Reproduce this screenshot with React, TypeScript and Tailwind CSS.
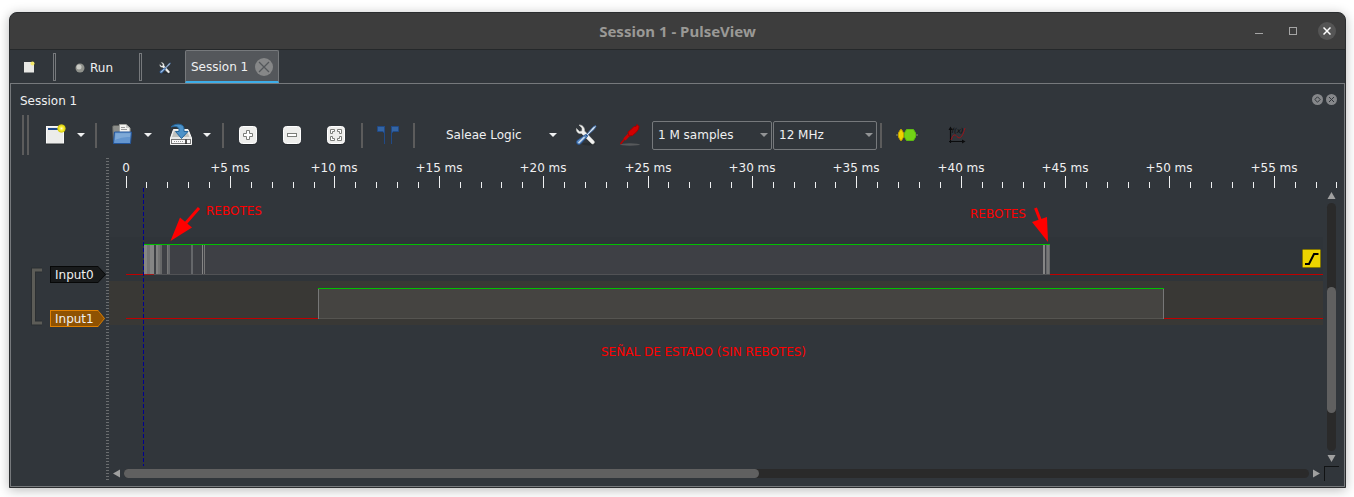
import React from "react";

const TICK = 20.876;
const ORIGIN = 17.12;

const BARS = [
  [35, 3, "#858585"], [38, 3, "#747474"], [41, 4, "#858585"],
  [47, 2, "#828282"], [49, 2, "#747474"], [51, 2, "#666768"],
  [58, 1, "#777777"], [59, 2, "#65676a"], [82, 2, "#65676a"],
  [93, 1, "#858585"], [95, 1, "#777777"],
  [934, 2, "#858585"], [937, 1, "#65676a"], [938, 2, "#777777"], [940, 1, "#65676a"],
] as const;

function Arrow({ dim = false }: { dim?: boolean }) {
  return (
    <svg width="8" height="4" viewBox="0 0 8 4" aria-hidden="true">
      <path d="M0 0H8L4 4Z" fill={dim ? "#929496" : "#eff0f1"} />
    </svg>
  );
}

function Separator() {
  return <span className="h-[25px] w-0.5 shrink-0 bg-[#5c5c5c]" />;
}

function ToolButton({ label, className = "w-11", children }: { label: string; className?: string; children: React.ReactNode }) {
  return (
    <button type="button" aria-label={label} className={`flex h-8 shrink-0 items-center justify-center ${className}`}>
      {children}
    </button>
  );
}

function SplitButton({ label, children }: { label: string; children: React.ReactNode }) {
  return (
    <div className="flex shrink-0">
      <ToolButton label={label} className="w-9">{children}</ToolButton>
      <ToolButton label={`${label} options`} className="w-4"><Arrow /></ToolButton>
    </div>
  );
}

function NewIcon() {
  return (
    <svg width="22" height="22" viewBox="0 0 22 22">
      <defs>
        <radialGradient id="glow">
          <stop offset="0" stopColor="#fffde0" />
          <stop offset="0.35" stopColor="#fff33b" />
          <stop offset="0.8" stopColor="#d9cf10" />
          <stop offset="1" stopColor="#d9cf10" stopOpacity="0.2" />
        </radialGradient>
      </defs>
      <rect x="2.5" y="2.5" width="17" height="17" fill="#ececea" stroke="#fafafa" />
      <rect x="2" y="19.5" width="18" height="1" fill="#24282b" />
      <rect x="4" y="4" width="12" height="2" fill="#204a87" />
      <circle cx="17.500" cy="4.500" r="4.500" fill="url(#glow)" />
    </svg>
  );
}

function OpenIcon() {
  return (
    <svg width="22" height="22" viewBox="0 0 22 22">
      <path d="M1.500 2.500L3 1.500H8L9 3V18H2.500Z" fill="#8b8d89" stroke="#5b5d5a" />
      <path d="M8.500 .5H15L19 4V11H8.500Z" fill="#f2f2f0" stroke="#a5a7a3" />
      <path d="M15 .5V4H19" fill="#c8c9c6" />
      <path d="M10 3.500H14M10 5.500H16" stroke="#999" />
      <path d="M3.500 8H20.500L19.500 19.500H2.500Z" fill="#6496cf" stroke="#24569b" />
      <path d="M4.500 9.200H19.300L19 13C12 13 9 14 4 16Z" fill="#8cb3dc" opacity=".65" />
    </svg>
  );
}

function SaveIcon() {
  return (
    <svg width="24" height="24" viewBox="0 0 24 24">
      <path d="M4.500 6.500H19L22.500 15V21.500H1.500V15Z" fill="#e8e9e7" stroke="#f8f8f7" />
      <path d="M5 8H18L20.500 14H3Z" fill="#bfc1be" />
      <rect x="2.500" y="16.500" width="19" height="4" fill="#fafafa" stroke="#777" />
      <path d="M5 18.500H14" stroke="#999" strokeDasharray="1 1" />
      <path d="M17 16.500V21" stroke="#222" strokeWidth="1.500" />
      <path d="M2 4C5 .5 14-.5 15 5V8.500H19L12.500 15.500L6.500 8.500H10V6C9 3 5.500 3 2 4Z" fill="#4d92c8" stroke="#25669b" />
    </svg>
  );
}

function ZoomIcon({ kind }: { kind: "in" | "out" | "fit" }) {
  return (
    <svg width="20" height="20" viewBox="0 0 20 20">
      <rect x="1" y="2" width="18" height="18" rx="3.500" fill="#202326" opacity=".6" />
      <rect x="1.500" y="1.500" width="17" height="17" rx="3" fill="#eeeeec" stroke="#fff" />
      {kind === "in" && <path d="M8.500 5.500H11.500V8.500H14.500V11.500H11.500V14.500H8.500V11.500H5.500V8.500H8.500Z" fill="#fff" stroke="#7c7e7a" />}
      {kind === "out" && <rect x="5.500" y="8.500" width="9" height="3" fill="#fff" stroke="#7c7e7a" />}
      {kind === "fit" && (
        <path
          d="M4.500 8.500V4.500H8.500V6.500H6.500V8.500ZM11.500 4.500H15.500V8.500H13.500V6.500H11.500ZM4.500 11.500H6.500V13.500H8.500V15.500H4.500ZM13.500 11.500H15.500V15.500H11.500V13.500H13.500Z"
          fill="#fff" stroke="#7c7e7a"
        />
      )}
    </svg>
  );
}

function CursorsIcon() {
  return (
    <svg width="22" height="20" viewBox="0 0 22 20">
      <path d="M.5 1.500H7.500V8L5.500 6.500H.5ZM21.500 1.500H14.500V8L16.500 6.500H21.500Z" fill="#3465a4" stroke="#204a87" />
      <path d="M7.500 1V19M14.500 1V19" stroke="#204a87" />
    </svg>
  );
}

function ToolsIcon({ size = 22 }: { size?: number }) {
  return (
    <svg width={size} height={size} viewBox="0 0 22 22">
      <ellipse cx="14" cy="20" rx="7" ry="1.500" fill="#202326" opacity=".5" />
      <path d="M4 1L7 4V7L4.500 7.500L1.500 4.500C1 7.500 3 10 6.500 9.500L16.500 19.500C18 21 20.500 19 19 17L9.500 7C10 3.500 7 .5 4 1Z" fill="#f1f1ef" stroke="#c5c6c3" strokeWidth=".6" />
      <path d="M20.500 1.500L18 3L11 11L12 12L19.500 5L21 2.500Z" fill="#d9e3ee" stroke="#3465a4" strokeWidth=".9" />
      <path d="M10.500 10.500L12.500 12.500L5.500 20C3.500 22 0 19 2 16.500Z" fill="#5384bd" stroke="#204a87" strokeWidth=".8" />
      <path d="M9.500 13L3.500 19" stroke="#d1dfee" strokeWidth="1.500" />
    </svg>
  );
}

function ProbeIcon() {
  return (
    <svg width="22" height="22" viewBox="0 0 22 22">
      <ellipse cx="11" cy="20.500" rx="10" ry="1.200" fill="#777" opacity=".55" />
      <path d="M1.500 20L8 12" stroke="#b00" strokeWidth="1.500" />
      <path d="M5.500 15.500L11 9.500" stroke="#c00" strokeWidth="3" />
      <path d="M9 8L11 6.500L15 2.500L17 2.500L18 .5L20 2.500L19.500 5L17.500 8L13.500 11.500L10 12Z" fill="#d20000" stroke="#a40000" />
    </svg>
  );
}

function DecoderIcon() {
  return (
    <svg width="22" height="12" viewBox="0 0 22 12">
      <path d="M0 6H22" stroke="#8a8d75" />
      <path d="M4.500 .5H5.500L7.500 4V8L5.500 11.500H4.500L2.500 8V4Z" fill="#edd400" stroke="#c4a000" />
      <path d="M10.500 .5H17.500L19.500 4V8L17.500 11.500H10.500L8.500 8V4Z" fill="#73d216" stroke="#5dbb12" />
    </svg>
  );
}

function MathIcon() {
  return (
    <svg width="18" height="18" viewBox="0 0 18 18">
      <path d="M2.500 17V2M1 15.500H15" stroke="#0b0c0d" strokeWidth="1.200" fill="none" />
      <path d="M.5 4L2.500 .5L4.500 4ZM14 13.500L17.500 15.500L14 17.500Z" fill="#0b0c0d" />
      <path d="M3 14C5 8 7 8 9 10.500S14 13 17 2" stroke="#a01218" fill="none" />
      <text x="3.500" y="7" fontSize="7" fontStyle="italic" fill="#0b0c0d" fontFamily="DejaVu Sans, sans-serif">f(x)</text>
    </svg>
  );
}

function TabSeparator() {
  return <span className="mt-[3px] h-7 w-[3px] shrink-0 border border-[#76797c]" />;
}

function SelectBox({ label, options, className }: { label: string; options: string[]; className: string }) {
  return (
    <div className={`relative shrink-0 ${className}`}>
      <select aria-label={label} className="h-[29px] w-full appearance-none rounded-xs border border-[#76797c] bg-[#31363b] pl-[5px] pr-5 text-xs text-[#eff0f1]">
        {options.map((o) => <option key={o}>{o}</option>)}
      </select>
      <span className="pointer-events-none absolute inset-y-0 right-1 flex items-center"><Arrow dim /></span>
    </div>
  );
}

function Ruler() {
  return (
    <svg className="mr-1.5 h-[30px] shrink-0" shapeRendering="crispEdges" fill="#eff0f1" fontSize="12">
      {Array.from({ length: 59 }, (_, i) => {
        const x = Math.floor(ORIGIN + i * TICK);
        const major = i % 5 === 0;
        return (
          <g key={i}>
            <rect x={x} y={major ? 18 : 24} width="1" height={major ? 12 : 6} />
            {major && <text x={x} y="14" textAnchor="middle">{i === 0 ? "0" : `+${i} ms`}</text>}
          </g>
        );
      })}
    </svg>
  );
}

function Plot() {
  return (
    <svg className="h-full min-w-0 flex-1" fontSize="12">
      <g shapeRendering="crispEdges">
        <rect y="49" width="100%" height="44" fill="#2f3439" />
        <rect y="93" width="100%" height="44" fill="#393835" />
        <rect x="17" y="86" width="100%" height="1" fill="#c00000" />
        <rect x="35" y="57" width="906" height="30" fill="#3e4045" />
        <rect x="35" y="86" width="906" height="1" fill="#515255" />
        <rect x="35" y="86" width="10" height="1" fill="#a01818" />
        {BARS.map(([x, w, fill]) => <rect key={x} x={x} y="57" width={w} height="29" fill={fill} />)}
        <rect x="35" y="56" width="906" height="1" fill="#00c000" />
        <rect x="17" y="130" width="100%" height="1" fill="#c00000" />
        <rect x="209" y="101" width="846" height="30" fill="#454441" />
        <rect x="209" y="130" width="846" height="1" fill="#555450" />
        <rect x="209" y="101" width="1" height="30" fill="#777" />
        <rect x="1054" y="101" width="1" height="30" fill="#777" />
        <rect x="209" y="100" width="846" height="1" fill="#00c000" />
        {Array.from({ length: 47 }, (_, i) => <rect key={i} x="34" y={i * 6} width="1" height={i === 46 ? 2 : 4} fill="#000090" />)}
      </g>
      <g fill="#f00" stroke="#f00">
        <path d="M90 20L76 36" strokeWidth="3" />
        <path d="M61.500 53L71 29.500L83 39.500Z" stroke="none" />
        <path d="M926.500 20L932 34" strokeWidth="3" />
        <path d="M939 54L923 34L938 29Z" stroke="none" />
      </g>
      <g fill="#f00">
        <text x="97" y="27">REBOTES</text>
        <text x="861" y="30">REBOTES</text>
        <text x="492" y="168">SEÑAL DE ESTADO (SIN REBOTES)</text>
      </g>
      <svg x="100%" overflow="visible">
        <rect x="-20.500" y="61.500" width="18" height="18" rx="1" fill="#edd400" stroke="#857700" />
        <path d="M-18 76H-14L-9 66H-4.500" fill="none" stroke="#000" strokeWidth="2" />
      </svg>
    </svg>
  );
}

function ScrollArrow({ d, label }: { d: string; label: string }) {
  return (
    <button type="button" aria-label={label} className="flex size-[9px] shrink-0 items-center justify-center">
      <svg width="9" height="9" viewBox="0 0 9 9"><path d={d} fill="#a0a0a0" /></svg>
    </button>
  );
}

export default function App() {
  return (
    <div className="flex h-screen min-h-[400px] bg-white pb-[9px] pl-[9px] pr-2 pt-3 font-['DejaVu_Sans',sans-serif] text-xs text-[#eff0f1]">
      <main className="flex min-w-0 flex-1 flex-col overflow-hidden rounded-t-lg border border-[#2b2d2f] bg-[#31363b] shadow-[0_2px_12px_rgba(0,0,0,0.28)]">
        <header className="flex h-[37px] shrink-0 items-center border-b border-[#25282a] bg-[#3d3d3d] pr-[9px]">
          <div className="w-[95px] shrink-0" />
          <h1 className="flex-1 text-center font-['Noto_Sans',sans-serif] text-[15px] font-bold text-[#9a9996]">Session 1 - PulseView</h1>
          <div className="flex w-[86px] shrink-0 items-center justify-between">
            <button type="button" aria-label="Minimize" className="flex h-[18px] w-[18px] items-center justify-center">
              <span className="mt-1 h-px w-2 bg-[#a5a5a5]" />
            </button>
            <button type="button" aria-label="Maximize" className="flex h-[18px] w-[14px] items-center justify-center">
              <span className="size-2 border border-[#a5a5a5]" />
            </button>
            <button type="button" aria-label="Close" className="flex size-[18px] items-center justify-center rounded-full bg-[#555]">
              <svg width="8" height="8" viewBox="0 0 8 8"><path d="M.5 .5L7.500 7.500M7.500 .5L.5 7.500" stroke="#fff" strokeWidth="1.500" /></svg>
            </button>
          </div>
        </header>

        <nav className="flex h-[33px] shrink-0">
          <button type="button" aria-label="New session" className="mr-[5px] flex w-[38px] items-center justify-center">
            <svg width="12" height="12" viewBox="0 0 12 12">
              <rect x="1" y="1" width="10" height="10.500" fill="#e8e8e5" />
              <circle cx="9.500" cy="2.500" r="2" fill="#f5e96a" />
            </svg>
          </button>
          <TabSeparator />
          <button type="button" className="flex w-[83px] items-center gap-[5px] pl-[19px] pt-0.5">
            <svg width="10" height="10" viewBox="0 0 10 10">
              <circle cx="5" cy="5" r="4.500" fill="#90928c" />
              <circle cx="4" cy="4" r="2.500" fill="#c9cac4" />
            </svg>
            Run
          </button>
          <TabSeparator />
          <button type="button" aria-label="Settings" className="flex w-[43px] items-center justify-center pl-0.5 pt-0.5"><ToolsIcon size={12} /></button>
          <div className="flex w-[94px] shrink-0 items-center justify-between rounded-t-xs border border-b-2 border-[#76797c] border-b-[#3daee9] bg-[#54575b] pl-[5px] pr-[5px] pt-0.5">
            <button type="button">Session 1</button>
            <button type="button" aria-label="Close session">
              <svg className="block" width="18" height="18" viewBox="0 0 18 18">
                <circle cx="9" cy="9" r="9" fill="#868788" />
                <path d="M4 4L14 14M14 4L4 14" stroke="#54575b" strokeWidth="1.300" />
              </svg>
            </button>
          </div>
        </nav>

        <section className="flex min-h-0 flex-1 flex-col border border-[#76797c]">
          <div className="flex h-[29px] shrink-0 items-center justify-between pl-[9px] pr-[7px] pt-1">
            <h2>Session 1</h2>
            <div className="flex gap-[3px] pb-0.5">
              <button type="button" aria-label="Float panel">
                <svg className="block" width="11" height="11" viewBox="0 0 11 11"><circle cx="5.500" cy="5.500" r="5.500" fill="#85878a" /><path d="M5.500 2.800L8.200 5.500L5.500 8.200L2.800 5.500Z" fill="none" stroke="#31363b" /></svg>
              </button>
              <button type="button" aria-label="Close panel">
                <svg className="block" width="11" height="11" viewBox="0 0 11 11"><circle cx="5.500" cy="5.500" r="5.500" fill="#85878a" /><path d="M3 3L8 8M8 3L3 8" stroke="#31363b" /></svg>
              </button>
            </div>
          </div>

          <div className="flex h-[42px] shrink-0 items-center overflow-hidden pl-[11px] pt-0.5">
            <span className="mr-2 h-10 w-[7px] shrink-0 border-x-2 border-[#5c5c5c]" />
            <div className="flex shrink-0 items-center gap-1.5">
              <SplitButton label="New view"><NewIcon /></SplitButton>
              <Separator />
            </div>
            <div className="ml-[7px] flex shrink-0 items-center gap-[7px]">
              <SplitButton label="Open"><OpenIcon /></SplitButton>
              <SplitButton label="Save"><SaveIcon /></SplitButton>
              <Separator />
            </div>
            <div className="ml-0.5 flex shrink-0">
              <ToolButton label="Zoom in"><ZoomIcon kind="in" /></ToolButton>
              <ToolButton label="Zoom out"><ZoomIcon kind="out" /></ToolButton>
              <ToolButton label="Zoom to fit"><ZoomIcon kind="fit" /></ToolButton>
            </div>
            <div className="ml-[3px] flex shrink-0 items-center gap-[3px]">
              <Separator />
              <ToolButton label="Show cursors"><CursorsIcon /></ToolButton>
              <Separator />
            </div>
            <button type="button" className="ml-[23px] flex h-8 w-[127px] shrink-0 items-center justify-between px-2">Saleae Logic <Arrow /></button>
            <ToolButton label="Configure device" className="w-[42px]"><ToolsIcon /></ToolButton>
            <ToolButton label="Configure channels" className="w-[45px]"><ProbeIcon /></ToolButton>
            <SelectBox label="Sample count" options={["1 M samples", "2 M samples"]} className="w-[120px]" />
            <SelectBox label="Sample rate" options={["12 MHz", "24 MHz"]} className="ml-px mr-[3px] w-[104px]" />
            <Separator />
            <ToolButton label="Add protocol decoder" className="ml-[3px] w-11"><DecoderIcon /></ToolButton>
            <ToolButton label="Add math signal" className="ml-1.5 w-11"><MathIcon /></ToolButton>
          </div>

          <div className="mt-[3px] flex min-h-0 flex-1">
            <aside className="flex w-[95px] shrink-0 items-start pl-5 pt-[108px]">
              <svg className="mt-px shrink-0" width="12" height="60" viewBox="0 0 12 60">
                <path d="M11 3H2.500V56H11" fill="none" stroke="#2b2f32" strokeWidth="5" />
                <path d="M11 3H2.500V56H11" fill="none" stroke="#5c5c57" strokeWidth="3" />
              </svg>
              <div className="ml-[7px] flex shrink-0 flex-col gap-[27px]">
                <button type="button" className="flex h-[17px] w-14 bg-[#070808] p-px [clip-path:polygon(0_0,48px_0,100%_50%,48px_100%,0_100%)]">
                  <span className="flex flex-1 items-center bg-[#181a1b] pl-1 [clip-path:polygon(0_0,47px_0,100%_50%,47px_100%,0_100%)]">Input0</span>
                </button>
                <button type="button" className="flex h-[17px] w-[55px] bg-[#e08000] p-px [clip-path:polygon(0_0,48px_0,100%_50%,48px_100%,0_100%)]">
                  <span className="flex flex-1 items-center bg-[#8f5202] pl-1 [clip-path:polygon(0_0,47px_0,100%_50%,47px_100%,0_100%)]">Input1</span>
                </button>
              </div>
            </aside>
            <div className="mb-1.5 w-[3px] shrink-0 bg-[repeating-linear-gradient(to_bottom,#6a6d6f_0px,#6a6d6f_1px,transparent_1px,transparent_3px)]" />
            <div className="flex min-w-0 flex-1 flex-col">
              <Ruler />
              <div className="flex min-h-0 flex-1">
                <Plot />
                <div className="flex w-[21px] shrink-0 flex-col items-center gap-[3px] pb-[3px] pr-1 pt-[3px]">
                  <ScrollArrow label="Scroll up" d="M.5 8L4.500 1L8.500 8Z" />
                  <div className="flex w-[9px] flex-1 flex-col rounded-full bg-[#2a2a2a]">
                    <div className="flex-[84]" />
                    <div className="flex-[126] rounded-full bg-[#606060]" />
                    <div className="flex-[38]" />
                  </div>
                  <ScrollArrow label="Scroll down" d="M.5 1L4.500 8L8.500 1Z" />
                </div>
              </div>
              <div className="flex h-5 shrink-0">
                <div className="flex flex-1 items-start gap-[3px] px-[3px] pt-[3px]">
                  <ScrollArrow label="Scroll left" d="M8 .5L1 4.500L8 8.500Z" />
                  <div className="flex h-[9px] flex-1 rounded-full bg-[#2a2a2a]">
                    <div className="flex-[635] rounded-full bg-[#606060]" />
                    <div className="flex-[550]" />
                  </div>
                  <ScrollArrow label="Scroll right" d="M1 .5L8 4.500L1 8.500Z" />
                </div>
                <div className="mr-[5px] h-[15px] w-[15px] shrink-0 border-l border-t border-[#111314]" />
              </div>
            </div>
          </div>
        </section>
      </main>
    </div>
  );
}
